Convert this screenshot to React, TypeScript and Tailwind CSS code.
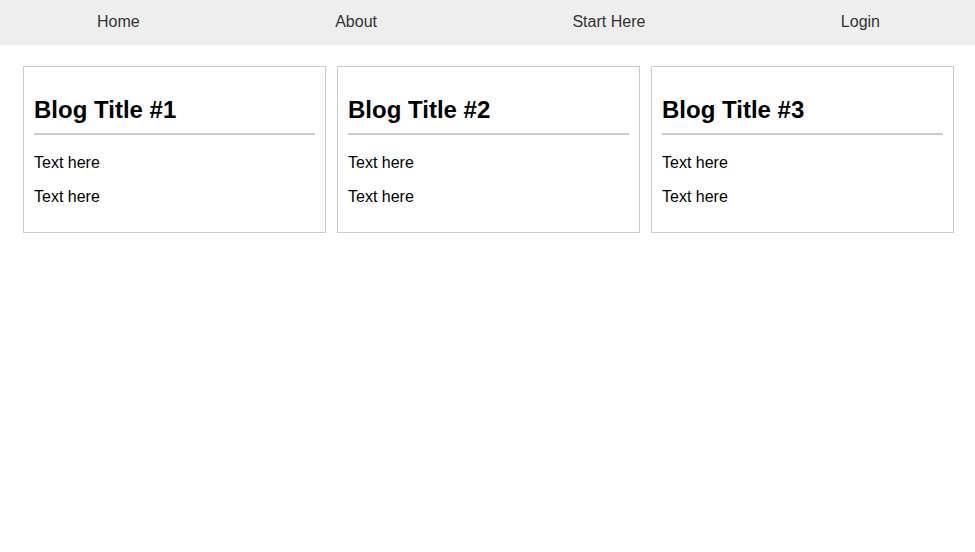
const links = ["Home", "About", "Start Here", "Login"];
const posts = [1, 2, 3];

export default function App() {
  return (
    <div className="min-h-screen bg-white font-['Liberation_Sans',Arial,sans-serif]">
      <nav className="flex h-[45px] items-center justify-between bg-[#eeeeee] pl-[97px] pr-[95px] text-base text-[#333333]">
        {links.map((l) => (
          <a key={l} href="#" className="pb-[2px]">
            {l}
          </a>
        ))}
      </nav>
      <main className="flex gap-[11px] pl-[23px] pr-[21px] pt-[21px]">
        {posts.map((n) => (
          <article
            key={n}
            className="flex-1 border border-[#cccccc] px-[10px] pb-[26px] pt-[29px]"
          >
            <h2 className="border-b-2 border-[#cccccc] pb-[9px] text-2xl leading-[1.15] font-bold text-black">
              Blog Title #{n}
            </h2>
            <p className="mt-[19px] leading-[1.15] text-black">Text here</p>
            <p className="mt-4 leading-[1.15] text-black">Text here</p>
          </article>
        ))}
      </main>
    </div>
  );
}
